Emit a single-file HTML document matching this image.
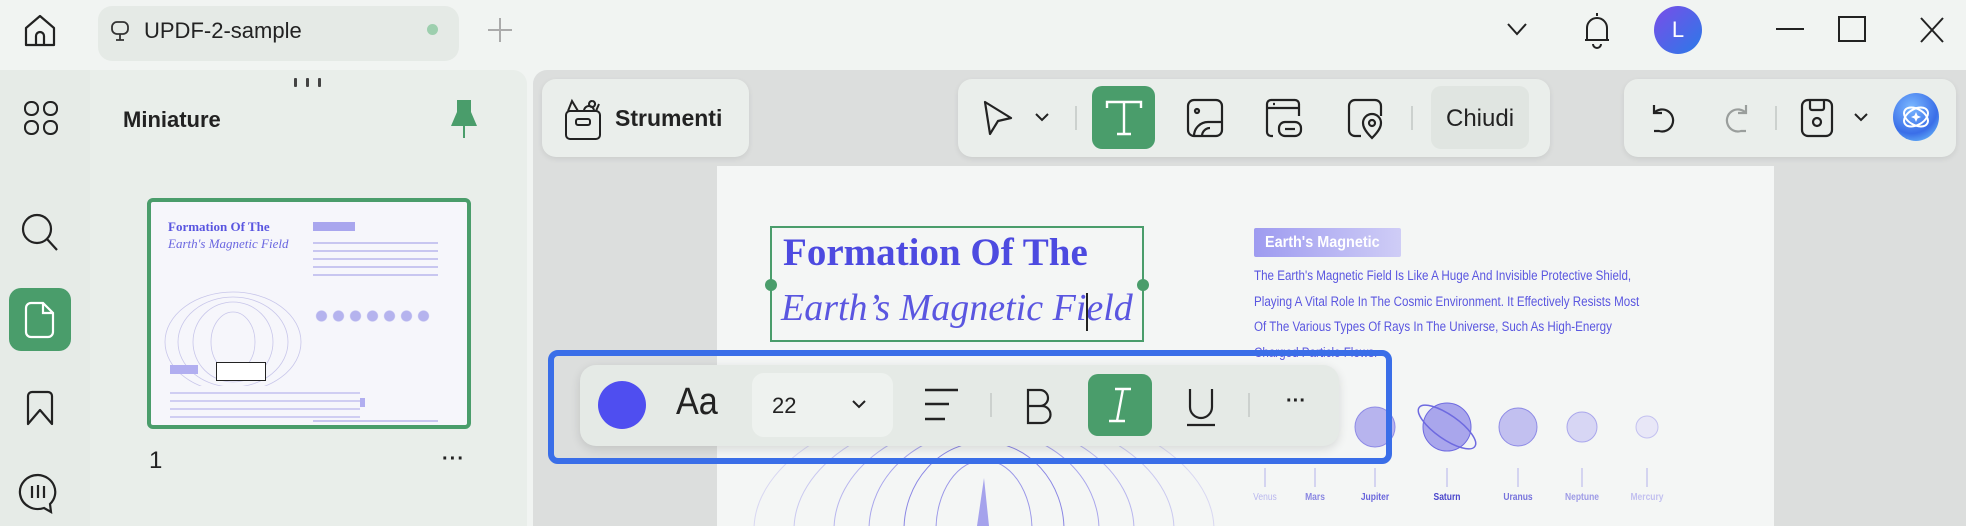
<!DOCTYPE html>
<html><head><meta charset="utf-8"><style>
*{margin:0;padding:0;box-sizing:border-box}
html,body{width:1966px;height:526px;overflow:hidden}
body{background:#f1f4f2;font-family:"Liberation Sans",sans-serif;position:relative;color:#1d1d1d}
.a{position:absolute}
svg{position:absolute;overflow:visible}
.card{position:absolute;background:#eaeeeb;border-radius:14px;box-shadow:0 2px 6px rgba(0,0,0,.08)}
.pt{position:absolute;color:#5a56e0;font-size:13.5px;white-space:nowrap;transform:scaleX(.86);transform-origin:left}
.pl{position:absolute;font-size:10px;color:#8f8ce0;transform:translateX(-50%) scaleX(.85);white-space:nowrap}
</style></head><body>
<!-- top bar -->
<svg style="left:22px;top:12px" width="36" height="36" viewBox="0 0 36 36" fill="none" stroke="#222" stroke-width="2.2"><path d="M4 16 L18 4 L32 16 V33 H4 Z" stroke-linejoin="round"/><path d="M14 33 V24 a4 4 0 0 1 8 0 V33"/></svg>
<div class="a" style="left:98px;top:6px;width:361px;height:55px;background:#e5eae6;border-radius:14px"></div>
<svg style="left:109px;top:20px" width="22" height="22" viewBox="0 0 22 22" fill="none" stroke="#333" stroke-width="1.8"><rect x="3" y="2" width="16" height="12" rx="5"/><path d="M11 14 V20 M7 20 H15"/></svg>
<div class="a" style="left:144px;top:18px;font-size:22px;color:#222">UPDF-2-sample</div>
<div class="a" style="left:427px;top:24px;width:11px;height:11px;border-radius:50%;background:#9dcfae"></div>
<svg style="left:488px;top:18px" width="24" height="24" fill="none" stroke="#aaa" stroke-width="2"><path d="M12 0V24M0 12H24"/></svg>
<svg style="left:1506px;top:22px" width="22" height="14" fill="none" stroke="#222" stroke-width="2"><path d="M2 2 L11 12 L20 2"/></svg>
<svg style="left:1582px;top:10px" width="30" height="40" fill="none" stroke="#222" stroke-width="2"><path d="M15 3 V6 M5 30 V18 a10 10 0 0 1 20 0 V30 Z M3 30 H27 M11 34 a4 4 0 0 0 8 0"/></svg>
<div class="a" style="left:1654px;top:6px;width:48px;height:48px;border-radius:50%;background:linear-gradient(135deg,#7a4de8,#2a7ae8);color:#fff;font-size:22px;text-align:center;line-height:48px">L</div>
<div class="a" style="left:1776px;top:28px;width:28px;height:2px;background:#222"></div>
<div class="a" style="left:1838px;top:16px;width:28px;height:26px;border:2px solid #222"></div>
<svg style="left:1920px;top:17px" width="24" height="26" fill="none" stroke="#222" stroke-width="2"><path d="M1 1 L23 25 M23 1 L1 25"/></svg>

<!-- left rail -->
<div class="a" style="left:0;top:70px;width:90px;height:456px;background:#e6ebe7"></div>
<div class="a" style="left:90px;top:70px;width:437px;height:456px;background:#e9eeea;border-top-right-radius:14px"></div>
<svg style="left:24px;top:101px" width="34" height="34" fill="none" stroke="#222" stroke-width="2"><rect x="1" y="1" width="13" height="13" rx="6"/><rect x="20" y="1" width="13" height="13" rx="6"/><rect x="1" y="20" width="13" height="13" rx="6"/><rect x="20" y="20" width="13" height="13" rx="6"/></svg>
<svg style="left:20px;top:212px" width="40" height="40" fill="none" stroke="#222" stroke-width="2.2"><circle cx="17" cy="17" r="14"/><path d="M27 27 L37 38"/></svg>
<div class="a" style="left:9px;top:288px;width:62px;height:63px;background:#4a9d6b;border-radius:12px"></div>
<svg style="left:25px;top:302px" width="30" height="36" fill="none" stroke="#fff" stroke-width="2.2"><path d="M6 1 H18 L28 11 V30 a5 5 0 0 1 -5 5 H6 a5 5 0 0 1 -5 -5 V6 a5 5 0 0 1 5 -5 Z M18 1 V11 H28"/></svg>
<svg style="left:26px;top:390px" width="28" height="36" fill="none" stroke="#222" stroke-width="2.2"><path d="M2 34 V6 a4 4 0 0 1 4 -4 H22 a4 4 0 0 1 4 4 V34 L14 20 Z" stroke-linejoin="round"/></svg>
<svg style="left:18px;top:473px" width="40" height="40" fill="none" stroke="#222" stroke-width="2.2"><path d="M20 2 a18 17 0 1 0 6 33 L33 39 L32 31 A18 17 0 0 0 20 2 Z"/><path d="M14 13 V25 M20 12 V25 M26 13 V25"/></svg>

<!-- sidebar -->
<div class="a" style="left:294px;top:78px;width:3px;height:9px;background:#444;border-radius:1px"></div>
<div class="a" style="left:306px;top:78px;width:3px;height:9px;background:#444;border-radius:1px"></div>
<div class="a" style="left:318px;top:78px;width:3px;height:9px;background:#444;border-radius:1px"></div>
<div class="a" style="left:123px;top:107px;font-size:22px;font-weight:bold;color:#222">Miniature</div>
<svg style="left:450px;top:100px" width="28" height="38" fill="#4a9d6b"><path d="M7 0 H21 V12 L27 26 H1 L7 12 Z"/><rect x="13" y="26" width="2" height="12"/></svg>
<div class="a" style="left:147px;top:198px;width:324px;height:231px;border:4px solid #4a9d6b;border-radius:6px;background:#f6f6fb;overflow:hidden">
 <div class="a" style="left:17px;top:17px;font:bold 13px 'Liberation Serif',serif;color:#5a56e0">Formation Of The</div>
 <div class="a" style="left:17px;top:34px;font:italic 13px 'Liberation Serif',serif;color:#6a66e0">Earth's Magnetic Field</div>
 <div class="a" style="left:162px;top:20px;width:42px;height:9px;background:#a9a6ee"></div>
 <div class="a" style="left:162px;top:34px;width:125px;height:42px;background:repeating-linear-gradient(#f6f6fb 0 6px,#c8c6f0 6px 8px)"></div>
 <div class="a" style="left:162px;top:106px;width:120px;height:16px;background:radial-gradient(circle,#b5b3ee 5px,transparent 6px) 0 0/17px 16px repeat-x"></div>
 <svg style="left:12px;top:80px" width="140" height="130" fill="none" stroke="#c8c6ea" stroke-width=".8"><ellipse cx="70" cy="60" rx="22" ry="30"/><ellipse cx="70" cy="60" rx="40" ry="40"/><ellipse cx="70" cy="60" rx="55" ry="45"/><ellipse cx="70" cy="60" rx="68" ry="50"/></svg>
 <div class="a" style="left:162px;top:196px;width:52px;height:9px;background:#b1aef0"></div>
 <div class="a" style="left:162px;top:212px;width:125px;height:34px;background:repeating-linear-gradient(#f6f6fb 0 6px,#c8c6f0 6px 8px)"></div>
 <div class="a" style="left:19px;top:163px;width:28px;height:9px;background:#b1aef0"></div>
 <div class="a" style="left:65px;top:160px;width:50px;height:19px;border:1px solid #222;background:#fff"></div>
 <div class="a" style="left:19px;top:184px;width:190px;height:34px;background:repeating-linear-gradient(#f6f6fb 0 6px,#d0cef2 6px 8px)"></div>
</div>
<div class="a" style="left:149px;top:447px;font-size:24px;color:#222">1</div>
<div class="a" style="left:442px;top:448px;font-size:20px;font-weight:bold;letter-spacing:1px;color:#222">···</div>

<!-- main -->
<div class="a" style="left:533px;top:70px;width:1433px;height:456px;background:#dcdedd;border-top-left-radius:14px"></div>
<div class="a" style="left:717px;top:166px;width:1057px;height:360px;background:#f4f6f5;overflow:hidden">
<svg style="left:0;top:164px" width="420" height="196" fill="none" stroke="#8a86e4" stroke-width="1">
 <ellipse cx="267" cy="200" rx="48" ry="70" stroke="#9a97e8"/>
 <ellipse cx="267" cy="200" rx="80" ry="88"/>
 <ellipse cx="267" cy="200" rx="115" ry="100" stroke="#a9a6ec"/>
 <ellipse cx="267" cy="200" rx="150" ry="110" stroke="#b8b6ee"/>
 <ellipse cx="267" cy="200" rx="190" ry="120" stroke="#cac9f0"/>
 <ellipse cx="267" cy="200" rx="230" ry="130" stroke="#d8d7f2"/>
 <path d="M267 148 L260 196 L272 196 Z" fill="#a5a2ec" stroke="none"/>
</svg>
</div>
<!-- title box -->
<div class="a" style="left:770px;top:226px;width:374px;height:116px;border:2px solid #4a9d6b"></div>
<div class="a" style="left:765px;top:279px;width:12px;height:12px;border-radius:50%;background:#4a9d6b"></div>
<div class="a" style="left:1137px;top:279px;width:12px;height:12px;border-radius:50%;background:#4a9d6b"></div>
<div class="a" style="left:783px;top:230px;font:bold 39px 'Liberation Serif',serif;color:#4d4ae0">Formation Of The</div>
<div class="a" style="left:781px;top:286px;font:italic 38px 'Liberation Serif',serif;color:#5a56e0">Earth’s Magnetic Field</div>
<div class="a" style="left:1086px;top:293px;width:2px;height:38px;background:#222"></div>
<!-- right text -->
<div class="a" style="left:1254px;top:228px;width:147px;height:29px;background:linear-gradient(90deg,#9e9bf0,#cfcdf6);border-radius:2px"></div>
<div class="a" style="left:1265px;top:234px;font-size:16px;font-weight:bold;color:#fff;transform:scaleX(.9);transform-origin:left">Earth's Magnetic</div>
<div class="pt" style="left:1254px;top:268px">The Earth's Magnetic Field Is Like A Huge And Invisible Protective Shield,</div>
<div class="pt" style="left:1254px;top:294px">Playing A Vital Role In The Cosmic Environment. It Effectively Resists Most</div>
<div class="pt" style="left:1254px;top:319px">Of The Various Types Of Rays In The Universe, Such As High-Energy</div>
<div class="pt" style="left:1254px;top:345px">Charged Particle Flows.</div>
<!-- planets -->
<svg style="left:1230px;top:395px" width="420" height="100">
 <circle cx="145" cy="32" r="20" fill="#b7b4ee" stroke="#8e8be6"/>
 <circle cx="217" cy="32" r="24" fill="#a9a6ec" stroke="#6e6ae0"/>
 <ellipse cx="217" cy="32" rx="34" ry="12" transform="rotate(35 217 32)" fill="none" stroke="#6e6ae0" stroke-width="1.5"/>
 <circle cx="288" cy="32" r="19" fill="#c2c0f0" stroke="#8e8be6"/>
 <circle cx="352" cy="32" r="15" fill="#d7d6f4" stroke="#a9a6ec"/>
 <circle cx="417" cy="32" r="11" fill="#e8e7f7" stroke="#c3c1f0"/>
 <g stroke="#b3b1ea"><path d="M35 73 V92 M85 73 V92 M145 73 V92 M217 73 V92 M288 73 V92 M352 73 V92 M417 73 V92"/></g>
</svg>
<div class="pl" style="left:1265px;top:492px;color:#b9b7ee">Venus</div>
<div class="pl" style="left:1315px;top:492px;color:#8a87e2;font-weight:bold">Mars</div>
<div class="pl" style="left:1375px;top:492px;color:#6a66dc;font-weight:bold">Jupiter</div>
<div class="pl" style="left:1447px;top:492px;color:#4a46cc;font-weight:bold">Saturn</div>
<div class="pl" style="left:1518px;top:492px;color:#7773dc;font-weight:bold">Uranus</div>
<div class="pl" style="left:1582px;top:492px;color:#9e9be6;font-weight:bold">Neptune</div>
<div class="pl" style="left:1647px;top:492px;color:#c3c1f0;font-weight:bold">Mercury</div>

<!-- toolbars -->
<div class="card" style="left:542px;top:79px;width:207px;height:78px"></div>
<svg style="left:564px;top:95px" width="40" height="46" fill="none" stroke="#222" stroke-width="2"><rect x="2" y="16" width="34" height="28" rx="4"/><rect x="12" y="24" width="14" height="6" rx="2"/><path d="M4 16 L8 6 L14 16 M20 16 a5 5 0 0 1 10 0 M28 6 a3 3 0 1 0 0.1 0 M32 16 L35 9"/></svg>
<div class="a" style="left:615px;top:105px;font-size:23px;font-weight:bold;color:#222">Strumenti</div>

<div class="card" style="left:958px;top:79px;width:592px;height:78px"></div>
<svg style="left:983px;top:100px" width="30" height="36" fill="none" stroke="#222" stroke-width="2.2"><path d="M2 2 L28 18 L15 21 L7 34 Z" stroke-linejoin="round"/></svg>
<svg style="left:1035px;top:113px" width="14" height="9" fill="none" stroke="#222" stroke-width="2"><path d="M1 1 L7 7 L13 1"/></svg>
<div class="a" style="left:1075px;top:106px;width:2px;height:24px;background:#ccd1ce"></div>
<div class="a" style="left:1092px;top:86px;width:63px;height:63px;background:#4a9d6b;border-radius:10px"></div>
<svg style="left:1105px;top:100px" width="38" height="36" fill="none" stroke="#fff" stroke-width="2.4"><path d="M2 8 V2 H36 V8 M19 2 V34 M12 34 H26"/></svg>
<svg style="left:1186px;top:98px" width="38" height="40" fill="none" stroke="#222" stroke-width="2.2"><rect x="2" y="2" width="34" height="36" rx="6"/><circle cx="11" cy="13" r="2"/><path d="M8 38 a14 14 0 0 1 14 -14 H36"/><path d="M16 38 a8 8 0 0 1 8 -8"/></svg>
<svg style="left:1265px;top:98px" width="40" height="40" fill="none" stroke="#222" stroke-width="2.2"><path d="M8 38 H6 a4 4 0 0 1 -4 -4 V6 a4 4 0 0 1 4 -4 H30 a4 4 0 0 1 4 4 V18 M2 10 H34 M8 6 H10"/><rect x="14" y="24" width="22" height="14" rx="6"/><path d="M20 31 H30"/></svg>
<svg style="left:1347px;top:98px" width="36" height="42" fill="none" stroke="#222" stroke-width="2.2"><path d="M14 38 H8 a6 6 0 0 1 -6 -6 V8 a6 6 0 0 1 6 -6 H28 a6 6 0 0 1 6 6 V18"/><path d="M25 40 C17 32 16 28 16 25 a9 9 0 0 1 18 0 C34 28 33 32 25 40 Z"/><circle cx="25" cy="25" r="3"/></svg>
<div class="a" style="left:1411px;top:106px;width:2px;height:24px;background:#ccd1ce"></div>
<div class="a" style="left:1431px;top:86px;width:98px;height:63px;background:#e0e5e1;border-radius:10px"></div>
<div class="a" style="left:1446px;top:105px;font-size:24px;color:#222">Chiudi</div>

<div class="card" style="left:1624px;top:79px;width:332px;height:78px"></div>
<svg style="left:1650px;top:103px" width="28" height="30" fill="none" stroke="#222" stroke-width="2.2"><path d="M4 2 V10 H12 M4 10 a11 11 0 1 1 5 18 H4"/></svg>
<svg style="left:1722px;top:103px" width="28" height="30" fill="none" stroke="#9a9e9c" stroke-width="2.2"><path d="M24 2 V10 H16 M24 10 a11 11 0 1 0 -5 18 H24"/></svg>
<div class="a" style="left:1775px;top:106px;width:2px;height:24px;background:#ccd1ce"></div>
<svg style="left:1800px;top:98px" width="34" height="40" fill="none" stroke="#222" stroke-width="2.2"><rect x="2" y="2" width="30" height="36" rx="6"/><path d="M10 2 V10 a2 2 0 0 0 2 2 H22 a2 2 0 0 0 2 -2 V2"/><circle cx="17" cy="24" r="4"/></svg>
<svg style="left:1854px;top:113px" width="14" height="9" fill="none" stroke="#222" stroke-width="2"><path d="M1 1 L7 7 L13 1"/></svg>
<div class="a" style="left:1893px;top:93px;width:46px;height:48px;border-radius:50%;background:radial-gradient(circle at 40% 30%,#7ab8ff,#3a6ee8 60%,#7ad6ff)"></div>
<svg style="left:1900px;top:101px" width="32" height="32" fill="none" stroke="#fff" stroke-width="2"><ellipse cx="16" cy="16" rx="13" ry="8" transform="rotate(-30 16 16)"/><ellipse cx="16" cy="16" rx="13" ry="8" transform="rotate(30 16 16)"/><path d="M16 11 L17.5 14.5 L21 16 L17.5 17.5 L16 21 L14.5 17.5 L11 16 L14.5 14.5 Z" fill="#fff" stroke="none"/></svg>

<!-- floating text toolbar -->
<div class="a" style="left:580px;top:365px;width:759px;height:81px;background:#e5eae6;border-radius:16px;box-shadow:0 3px 10px rgba(0,0,0,.12)"></div>
<div class="a" style="left:548px;top:350px;width:844px;height:114px;border:6px solid #3a6ee8;border-radius:10px"></div>
<div class="a" style="left:598px;top:381px;width:48px;height:48px;border-radius:50%;background:#4f4ef0"></div>
<div class="a" style="left:676px;top:381px;font-size:38px;color:#222;transform:scaleX(.9);transform-origin:left">Aa</div>
<div class="a" style="left:752px;top:373px;width:141px;height:64px;background:#eef2ef;border-radius:12px"></div>
<div class="a" style="left:772px;top:393px;font-size:22px;color:#222">22</div>
<svg style="left:852px;top:400px" width="14" height="9" fill="none" stroke="#222" stroke-width="2"><path d="M1 1 L7 7 L13 1"/></svg>
<svg style="left:925px;top:388px" width="34" height="34" stroke="#222" stroke-width="2.4"><path d="M0 2 H33 M0 16 H24 M0 31 H20"/></svg>
<div class="a" style="left:990px;top:393px;width:2px;height:24px;background:#ccd1ce"></div>
<svg style="left:1026px;top:388px" width="28" height="36" fill="none" stroke="#222" stroke-width="2.2"><path d="M2 2 H14 a8 8 0 0 1 0 16 H2 Z M2 18 H16 a8.5 8.5 0 0 1 0 17 H2 V2"/></svg>
<div class="a" style="left:1088px;top:374px;width:64px;height:62px;background:#4a9d6b;border-radius:10px"></div>
<svg style="left:1107px;top:387px" width="26" height="36" fill="none" stroke="#fff" stroke-width="2.4"><path d="M8 2 H24 M2 34 H18 M16 2 L10 34"/></svg>
<svg style="left:1185px;top:387px" width="32" height="40" fill="none" stroke="#222" stroke-width="2.2"><path d="M5 2 V20 a11 11 0 0 0 22 0 V2 M2 38 H30"/></svg>
<div class="a" style="left:1248px;top:393px;width:2px;height:24px;background:#ccd1ce"></div>
<div class="a" style="left:1286px;top:390px;font-size:20px;font-weight:bold;color:#222">···</div>
</body></html>
